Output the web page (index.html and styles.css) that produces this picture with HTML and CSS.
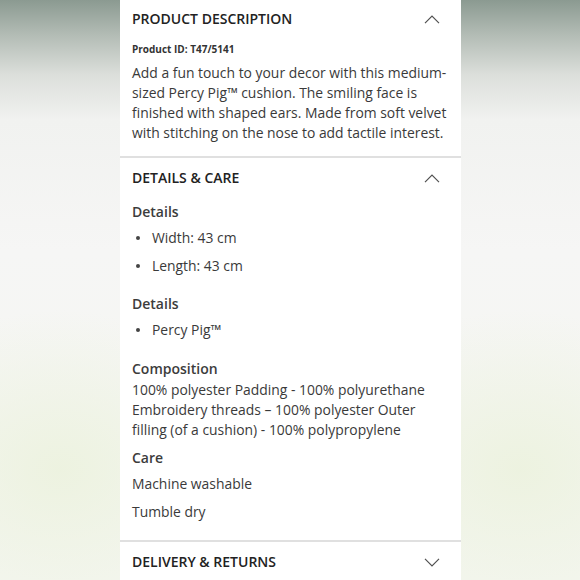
FILE: index.html
```html
<!DOCTYPE html>
<html lang="en">
<head>
<meta charset="utf-8">
<title>Product details</title>
<link rel="stylesheet" href="styles.css">
</head>
<body>
<main class="panel">
  <section class="sec sec-desc">
    <div class="sec-head">
      <h2 class="sec-title">PRODUCT DESCRIPTION</h2>
      <svg class="chev" width="16" height="9" viewBox="0 0 16 9"><path d="M1 8.2 L8 1.2 L15 8.2" fill="none" stroke="#505050" stroke-width="1.2"/></svg>
    </div>
    <p class="pid">Product ID: T47/5141</p>
    <p class="body-text">Add a fun touch to your decor with this medium-sized Percy Pig™ cushion. The smiling face is finished with shaped ears. Made from soft velvet with stitching on the nose to add tactile interest.</p>
  </section>
  <section class="sec sec-care">
    <div class="sec-head">
      <h2 class="sec-title">DETAILS &amp; CARE</h2>
      <svg class="chev" width="16" height="9" viewBox="0 0 16 9"><path d="M1 8.2 L8 1.2 L15 8.2" fill="none" stroke="#505050" stroke-width="1.2"/></svg>
    </div>
    <h3 class="sub sub-first">Details</h3>
    <ul class="bullets">
      <li>Width: 43 cm</li>
      <li>Length: 43 cm</li>
    </ul>
    <h3 class="sub sub-second">Details</h3>
    <ul class="bullets">
      <li>Percy Pig™</li>
    </ul>
    <h3 class="sub sub-comp">Composition</h3>
    <p class="body-text comp">100% polyester Padding - 100% polyurethane Embroidery threads – 100% polyester Outer filling (of a cushion) - 100% polypropylene</p>
    <h3 class="sub sub-care">Care</h3>
    <p class="care-line first">Machine washable</p>
    <p class="care-line">Tumble dry</p>
  </section>
  <section class="sec sec-delivery">
    <div class="sec-head">
      <h2 class="sec-title">DELIVERY &amp; RETURNS</h2>
      <svg class="chev" width="16" height="9" viewBox="0 0 16 9"><path d="M1 0.8 L8 7.8 L15 0.8" fill="none" stroke="#505050" stroke-width="1.2"/></svg>
    </div>
  </section>
</main>
</body>
</html>
```
FILE: styles.css
```css
html, body {
  margin: 0;
  padding: 0;
  height: 100%;
}
body {
  font-family: "Open Sans", "Noto Sans", sans-serif;
  color: #333;
  display: flex;
  justify-content: center;
  overflow: hidden;
  background:
    radial-gradient(ellipse 200px 160px at 60px 470px, rgba(236, 242, 222, 0.9), rgba(236, 242, 222, 0) 100%),
    radial-gradient(ellipse 200px 160px at 520px 470px, rgba(236, 242, 222, 0.9), rgba(236, 242, 222, 0) 100%),
    linear-gradient(to bottom, #8b9a91 0px, #b3bcb5 35px, #dcdfdb 75px, #f1f2f0 120px, #f6f6f5 250px, #f4f6f0 580px);
}
.panel {
  width: 341px;
  height: 580px;
  background: #fff;
  margin-left: 1px;
}
.sec {
  padding: 0 8px 0 12px;
}
.sec + .sec {
  border-top: 2px solid #e0e0e0;
}
.sec-head {
  display: flex;
  justify-content: space-between;
  align-items: center;
  height: 20px;
}
.sec-desc .sec-head { margin-top: 9px; }
.sec-care .sec-head { margin-top: 10px; }
.sec-delivery .sec-head { margin-top: 10px; }
.sec-title {
  margin: 0;
  font-size: 14px;
  font-weight: 600;
  color: #222;
  line-height: 20px;
}
.chev {
  display: block;
  margin-right: 13px;
}
.pid {
  margin: 13px 0 0;
  font-size: 10px;
  font-weight: 700;
  line-height: 14px;
  color: #333;
}
.body-text {
  margin: 7px 0 0;
  font-size: 13.9px;
  line-height: 20px;
  color: #3a3a3a;
}
.sec-desc { padding-bottom: 13px; }
.sub {
  margin: 0;
  font-size: 14px;
  font-weight: 600;
  line-height: 20px;
  color: #3c3c3c;
}
.sub-first { margin-top: 14px; }
.sub-second { margin-top: 18px; }
.sub-comp { margin-top: 19px; }
.sub-care { margin-top: 8px; }
.comp { margin-top: 1px; padding-right: 24px; }
.bullets {
  list-style: none;
  margin: 6px 0 0;
  padding: 0;
}
.bullets li {
  position: relative;
  padding-left: 20px;
  font-size: 13.9px;
  line-height: 20px;
  color: #3a3a3a;
}
.bullets li + li { margin-top: 8px; }
.bullets li::before {
  content: "";
  position: absolute;
  left: 4px;
  top: 8px;
  width: 4px;
  height: 4px;
  border-radius: 50%;
  background: #444;
}
.care-line {
  margin: 8px 0 0;
  font-size: 13.9px;
  line-height: 20px;
  color: #3a3a3a;
}
.care-line.first { margin-top: 6px; }
.sec-care { padding-bottom: 18px; }
```
